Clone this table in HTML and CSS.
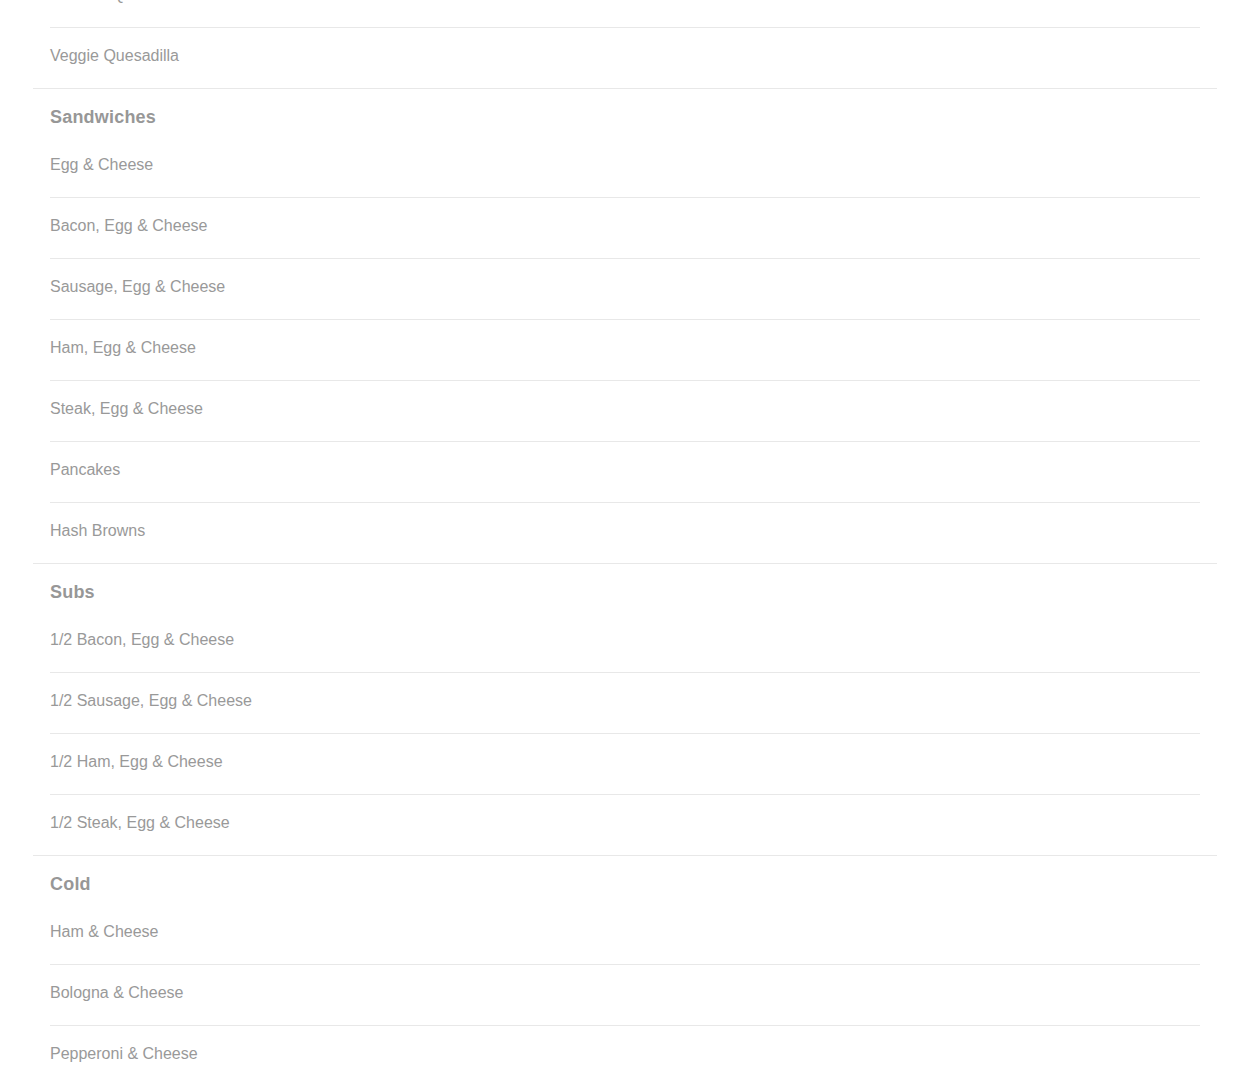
FILE: index.html
```html
<!DOCTYPE html>
<html lang="en">
<head>
<meta charset="utf-8">
<title>Menu</title>
<link rel="stylesheet" href="styles.css">
</head>
<body>
<div class="menu">
  <section class="menu-section menu-section--cont">
    <ul class="items">
      <li class="item">Chicken Quesadilla</li>
      <li class="item">Veggie Quesadilla</li>
    </ul>
  </section>
  <section class="menu-section">
    <h2 class="section-title">Sandwiches</h2>
    <ul class="items">
      <li class="item">Egg &amp; Cheese</li>
      <li class="item">Bacon, Egg &amp; Cheese</li>
      <li class="item">Sausage, Egg &amp; Cheese</li>
      <li class="item">Ham, Egg &amp; Cheese</li>
      <li class="item">Steak, Egg &amp; Cheese</li>
      <li class="item">Pancakes</li>
      <li class="item">Hash Browns</li>
    </ul>
  </section>
  <section class="menu-section">
    <h2 class="section-title">Subs</h2>
    <ul class="items">
      <li class="item">1/2 Bacon, Egg &amp; Cheese</li>
      <li class="item">1/2 Sausage, Egg &amp; Cheese</li>
      <li class="item">1/2 Ham, Egg &amp; Cheese</li>
      <li class="item">1/2 Steak, Egg &amp; Cheese</li>
    </ul>
  </section>
  <section class="menu-section">
    <h2 class="section-title">Cold</h2>
    <ul class="items">
      <li class="item">Ham &amp; Cheese</li>
      <li class="item">Bologna &amp; Cheese</li>
      <li class="item">Pepperoni &amp; Cheese</li>
    </ul>
  </section>
</div>
</body>
</html>
```

FILE: styles.css
```css
html, body {
  margin: 0;
  padding: 0;
  background: #ffffff;
}

body {
  font-family: "Liberation Sans", Arial, sans-serif;
  color: #999999;
  overflow: hidden;
}

.menu {
  margin: -33px 33px 0;
}

.menu-section {
  padding: 18px 17px 0;
  border-bottom: 1px solid #e8e8e8;
}

.menu-section--cont {
  padding-top: 0;
}

.section-title {
  margin: 0 0 9px;
  font-size: 18px;
  line-height: 21px;
  font-weight: bold;
  letter-spacing: 0.2px;
  color: #979797;
}

.items {
  list-style: none;
  margin: 0;
  padding: 0;
}

.item {
  padding: 18px 0 22px;
  font-size: 16px;
  line-height: 20px;
  border-bottom: 1px solid #e8e8e8;
}

.item:last-child {
  border-bottom: none;
}
```
